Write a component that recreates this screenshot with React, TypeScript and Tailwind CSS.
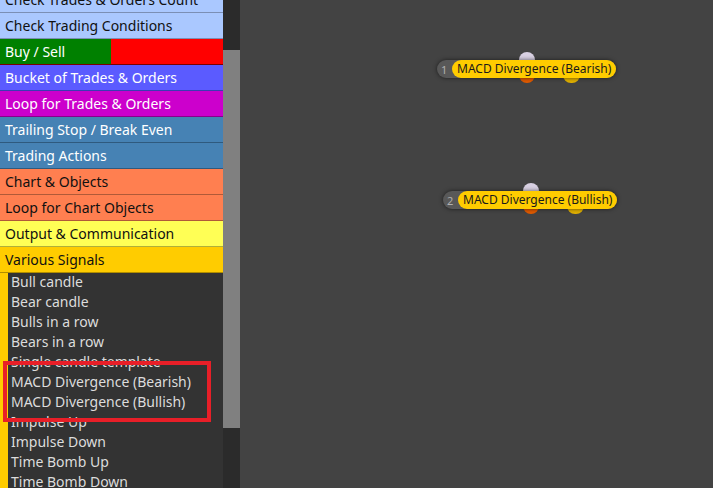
import React from "react";

type Row = { label: string; bg: string; border: string; text: string };

const rows: Row[] = [
  { label: "Check Trades & Orders Count", bg: "bg-[#aac8ff]", border: "border-[#7b8fb5]", text: "text-[#111]" },
  { label: "Check Trading Conditions", bg: "bg-[#aac8ff]", border: "border-[#7b8fb5]", text: "text-[#111]" },
];

const rows2: Row[] = [
  { label: "Bucket of Trades & Orders", bg: "bg-[#5b5bff]", border: "border-[#3c3cb0]", text: "text-white" },
  { label: "Loop for Trades & Orders", bg: "bg-[#cc00cc]", border: "border-[#8a008a]", text: "text-white" },
  { label: "Trailing Stop / Break Even", bg: "bg-[#4682b4]", border: "border-[#2f5a7e]", text: "text-white" },
  { label: "Trading Actions", bg: "bg-[#4682b4]", border: "border-[#2f5a7e]", text: "text-white" },
  { label: "Chart & Objects", bg: "bg-[#ff7f50]", border: "border-[#b05a38]", text: "text-[#111]" },
  { label: "Loop for Chart Objects", bg: "bg-[#ff7f50]", border: "border-[#b05a38]", text: "text-[#111]" },
  { label: "Output & Communication", bg: "bg-[#ffff55]", border: "border-[#b0b03a]", text: "text-[#111]" },
  { label: "Various Signals", bg: "bg-[#ffcc00]", border: "border-[#b08d00]", text: "text-[#111]" },
];

const subs = [
  "Bull candle",
  "Bear candle",
  "Bulls in a row",
  "Bears in a row",
  "Single candle template",
  "MACD Divergence (Bearish)",
  "MACD Divergence (Bullish)",
  "Impulse Up",
  "Impulse Down",
  "Time Bomb Up",
  "Time Bomb Down",
];

function Header({ r }: { r: Row }) {
  return (
    <div className={`h-[26px] shrink-0 flex items-center pl-[5px] border-b ${r.bg} ${r.border} ${r.text}`}>
      {r.label}
    </div>
  );
}

function Node({
  left,
  top,
  num,
  label,
  topDot,
  yellowDot,
}: {
  left: number;
  top: number;
  num: string;
  label: string;
  topDot: number;
  yellowDot: number;
}) {
  return (
    <div className="absolute" style={{ left, top }}>
      <div className="relative">
        <div
          className="absolute w-[16px] h-[16px] rounded-full bg-[#d9d1e3]"
          style={{ left: topDot, top: -8 }}
        />
        <div
          className="absolute w-[16px] h-[16px] rounded-full bg-[#e05a00]"
          style={{ left: topDot, top: 7 }}
        />
        <div
          className="absolute w-[17px] h-[16px] rounded-full bg-[#e0b000]"
          style={{ left: yellowDot, top: 7 }}
        />
        <div className="relative flex items-center h-[18px] rounded-full bg-[#585858] shadow-[0_0_4px_rgba(0,0,0,0.6)]">
          <span className="w-[15px] pl-[4px] text-[11px] text-[#b0b0b0] leading-none">{num}</span>
          <span className="h-[18px] flex items-center rounded-full bg-[#ffcc00] pl-[5px] pr-[5px] text-[12px] text-[#1a1a1a] leading-none">
            {label}
          </span>
        </div>
      </div>
    </div>
  );
}

export default function App() {
  return (
    <div
      className="w-[713px] h-[488px] flex overflow-hidden bg-[#434343] text-[14px]"
      style={{ fontFamily: '"Noto Sans", "Open Sans", sans-serif' }}
    >
      <div className="w-[223px] h-full shrink-0 overflow-hidden bg-[#333333]">
        <div className="flex flex-col mt-[-13px]">
          {rows.map((r) => (
            <Header key={r.label} r={r} />
          ))}
          <div className="h-[26px] shrink-0 flex border-b border-[#7a0000]">
            <div className="w-[111px] bg-[#008000] text-white flex items-center pl-[5px]">Buy / Sell</div>
            <div className="flex-1 bg-[#ff0000]" />
          </div>
          {rows2.map((r) => (
            <Header key={r.label} r={r} />
          ))}
          <div className="flex">
            <div className="w-[8px] shrink-0 bg-[#ffcc00]" />
            <div className="relative flex flex-col mt-[-2px]">
              {subs.map((s) => (
                <div key={s} className="h-[20px] flex items-center pl-[3px] text-[#dcdcdc]">
                  {s}
                </div>
              ))}
              <div className="absolute left-[-5px] top-[90px] w-[208px] h-[61px] border-[4px] border-[#e81f28]" />
            </div>
          </div>
        </div>
      </div>
      <div className="w-[17px] h-full shrink-0 bg-[#2b2b2b] flex flex-col pt-[50px]">
        <div className="h-[378px] bg-[#808080]" />
      </div>
      <div className="relative flex-1 h-full">
        <Node left={197} top={60} num="1" label="MACD Divergence (Bearish)" topDot={82} yellowDot={126} />
        <Node left={203} top={191} num="2" label="MACD Divergence (Bullish)" topDot={80} yellowDot={124} />
      </div>
    </div>
  );
}
